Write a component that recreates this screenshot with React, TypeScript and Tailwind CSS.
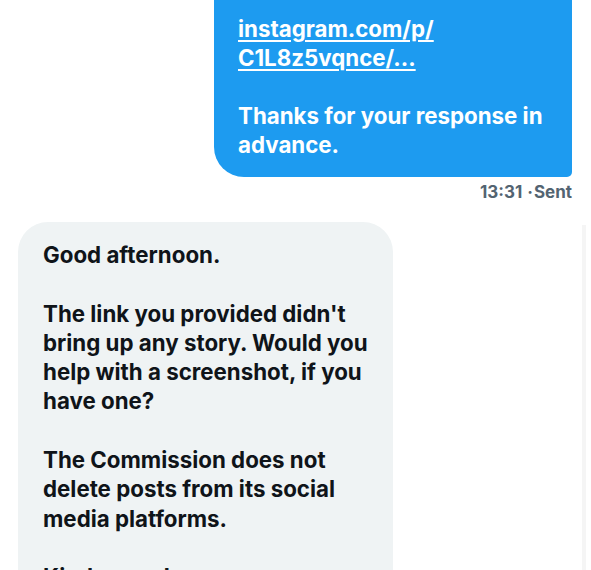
import React from 'react';

const font = { fontFamily: 'Inter, "Liberation Sans", Arial, sans-serif' };

export default function App() {
  return (
    <div
      className="relative w-[591px] h-[570px] overflow-hidden bg-white"
      style={font}
    >
      {/* outgoing message */}
      <div className="flex flex-col items-end pr-[19px]">
        <div className="w-[358px] bg-[#1d9bf0] rounded-bl-[30px] rounded-br-[5px] pl-[24px] pr-[12px] pt-[14px] pb-[18px] text-white font-bold text-[22.3px] leading-[29px] whitespace-nowrap">
          <div className="underline underline-offset-[3px] decoration-[1.5px]">instagram.com/p/</div>
          <div className="underline underline-offset-[3px] decoration-[1.5px]">C1L8z5vqnce/...</div>
          <div className="h-[29px]" />
          <div>Thanks for your response in</div>
          <div>advance.</div>
        </div>
        <div className="mt-[5px] text-[17px] leading-[20px] font-bold text-[#536471]">
          13:31 <span className="mx-[1px]">·</span>Sent
        </div>
      </div>

      {/* incoming message */}
      <div className="pl-[18px] mt-[20px]">
        <div className="w-[375px] bg-[#eff3f4] rounded-t-[30px] pl-[25px] pr-[10px] pt-[18px] pb-[20px] text-[#0f1419] font-bold text-[22.3px] leading-[29.3px] whitespace-nowrap">
          <div>Good afternoon.</div>
          <div className="h-[29.3px]" />
          <div>The link you provided didn't</div>
          <div>bring up any story. Would you</div>
          <div>help with a screenshot, if you</div>
          <div>have one?</div>
          <div className="h-[29.3px]" />
          <div>The Commission does not</div>
          <div>delete posts from its social</div>
          <div>media platforms.</div>
          <div className="h-[29.3px]" />
          <div>Kind regards.</div>
        </div>
      </div>

      {/* faint scrollbar track */}
      <div className="absolute right-[5px] top-[225px] bottom-0 w-[4px] bg-[#f5f5f5]" />
    </div>
  );
}
